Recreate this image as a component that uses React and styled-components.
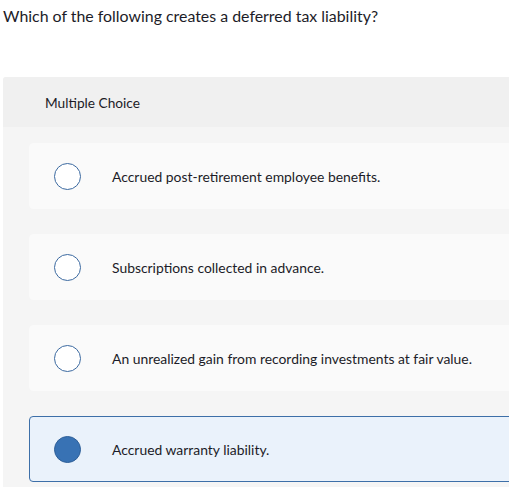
import React from 'react'
import styled, { createGlobalStyle } from 'styled-components'

const GlobalStyle = createGlobalStyle`
  html, body {
    margin: 0;
    padding: 0;
    background: #ffffff;
  }
  body {
    font-family: Lato, "Liberation Sans", Arial, sans-serif;
    color: #1c1c28;
  }
`

const Page = styled.div`
  width: 509px;
  height: 487px;
  overflow: hidden;
  padding-left: 3px;
  box-sizing: border-box;
`

const Question = styled.p`
  margin: 0;
  padding-top: 6px;
  font-size: 15.9px;
  line-height: 20px;
  color: #1c1c28;
`

const Panel = styled.div`
  margin-top: 51px;
  width: 560px;
  background: #f5f5f5;
  border-radius: 3px 0 0 0;
`

const PanelHeader = styled.div`
  height: 50px;
  display: flex;
  align-items: center;
  padding-left: 42px;
  background: #f0f0f0;
  border-radius: 3px 0 0 0;
  font-size: 13.7px;
`

const Choices = styled.div`
  display: flex;
  flex-direction: column;
  gap: 25px;
  padding: 16px 0 24px 26px;
`

const Choice = styled.label`
  height: 66px;
  box-sizing: border-box;
  display: flex;
  align-items: center;
  padding-left: 24px;
  gap: 31px;
  background: ${p => (p.$selected ? '#eaf2fb' : '#fafafa')};
  border: 1px solid ${p => (p.$selected ? '#3d6fa8' : '#fafafa')};
  border-radius: 4px;
  font-size: 13.9px;
  cursor: pointer;
`

const Radio = styled.span`
  flex: none;
  width: 27px;
  height: 27px;
  box-sizing: border-box;
  border-radius: 50%;
  border: 1.5px solid ${p => (p.$selected ? '#2e5f98' : '#3b69a0')};
  background: ${p => (p.$selected ? '#3872b4' : '#ffffff')};
`

const ChoiceText = styled.span`
  color: #1c1c28;
`

const choices = [
  'Accrued post-retirement employee benefits.',
  'Subscriptions collected in advance.',
  'An unrealized gain from recording investments at fair value.',
  'Accrued warranty liability.',
]

export default function App() {
  const selected = 3
  return (
    <Page>
      <GlobalStyle />
      <Question>Which of the following creates a deferred tax liability?</Question>
      <Panel>
        <PanelHeader>Multiple Choice</PanelHeader>
        <Choices>
          {choices.map((text, i) => (
            <Choice key={text} $selected={i === selected}>
              <Radio $selected={i === selected} />
              <ChoiceText>{text}</ChoiceText>
            </Choice>
          ))}
        </Choices>
      </Panel>
    </Page>
  )
}
